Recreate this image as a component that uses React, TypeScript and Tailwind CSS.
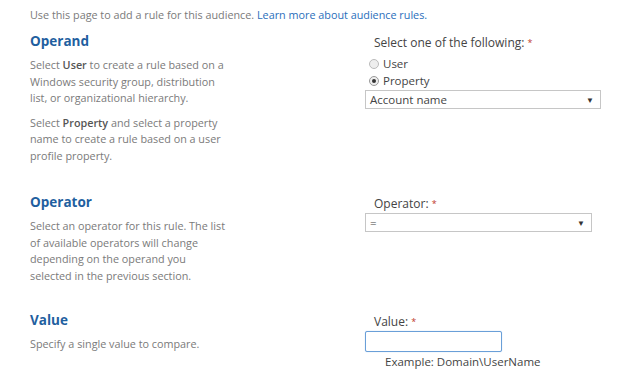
import React from "react";

const font = { fontFamily: '"Open Sans", "Noto Sans", sans-serif' };

function Section({
  title,
  children,
  right,
  className,
}: {
  title: string;
  children: React.ReactNode;
  right: React.ReactNode;
  className?: string;
}) {
  return (
    <div className={"flex " + (className ?? "")}>
      <div className="w-[335px] pl-[30px]">
        <h2 className="text-[13.5px] font-bold leading-[18px] text-[#1f5f9f]">{title}</h2>
        <div className="mt-[7px] w-[200px] text-[10.8px] leading-[16.5px] text-[#7a7a7a]">{children}</div>
      </div>
      <div className="flex-1">{right}</div>
    </div>
  );
}

function Label({ text }: { text: string }) {
  return (
    <div className="pl-[39px] text-[12px] leading-[18px] text-[#444]">
      {text} <span className="text-[#c0392b] text-[9px] align-top">*</span>
    </div>
  );
}

function Select({ value, width }: { value: string; width: string }) {
  return (
    <div
      className={
        "ml-[30px] flex h-[19px] items-center justify-between border border-[#c6c6c6] bg-white pl-[4px] pr-[6px] text-[11.5px] text-[#444] " +
        width
      }
    >
      <span>{value}</span>
      <span className="text-[8px] text-[#333]">▼</span>
    </div>
  );
}

export default function App() {
  return (
    <div className="min-h-screen w-[624px] bg-white pt-[6px]" style={font}>
      <p className="pl-[30px] text-[10.8px] leading-[18px] text-[#7a7a7a]">
        Use this page to add a rule for this audience.{" "}
        <a className="text-[#2a6ebb]">Learn more about audience rules.</a>
      </p>

      <Section
        className="mt-[8px]"
        title="Operand"
        right={
          <div className="pt-[2px]">
            <Label text="Select one of the following:" />
            <div className="mt-[3px] flex items-center pl-[34px] text-[11.5px] leading-[18px] text-[#444]">
              <span className="mr-[4px] h-[10px] w-[10px] rounded-full border border-[#bbb] bg-[#eee]" />
              User
            </div>
            <div className="-mt-[1px] flex items-center pl-[34px] text-[11.5px] leading-[18px] text-[#444]">
              <span className="mr-[4px] flex h-[10px] w-[10px] items-center justify-center rounded-full border border-[#999] bg-[#eee]">
                <span className="h-[4px] w-[4px] rounded-full bg-[#333]" />
              </span>
              Property
            </div>
            <Select value="Account name" width="w-[236px]" />
          </div>
        }
      >
        <p>
          Select <b className="font-semibold text-[#555]">User</b> to create a rule based on a Windows security group,
          distribution list, or organizational hierarchy.
        </p>
        <p className="mt-[8px]">
          Select <b className="font-semibold text-[#555]">Property</b> and select a property name to create a rule
          based on a user profile property.
        </p>
      </Section>

      <Section
        className="mt-[29px]"
        title="Operator"
        right={
          <div className="pt-[2px]">
            <Label text="Operator:" />
            <Select value="=" width="w-[227px]" />
          </div>
        }
      >
        <p>
          Select an operator for this rule. The list of available operators will change depending on the operand you
          selected in the previous section.
        </p>
      </Section>

      <Section
        className="mt-[27px]"
        title="Value"
        right={
          <div className="pt-[2px]">
            <Label text="Value:" />
            <div className="ml-[30px] h-[21px] w-[137px] rounded-[2px] border border-[#6a9fd8] bg-white shadow-[0_0_1px_#9cc3ea]" />
            <div className="pl-[50px] pt-[1px] text-[11.5px] leading-[18px] text-[#444]">Example: Domain\UserName</div>
          </div>
        }
      >
        <p>Specify a single value to compare.</p>
      </Section>
    </div>
  );
}
